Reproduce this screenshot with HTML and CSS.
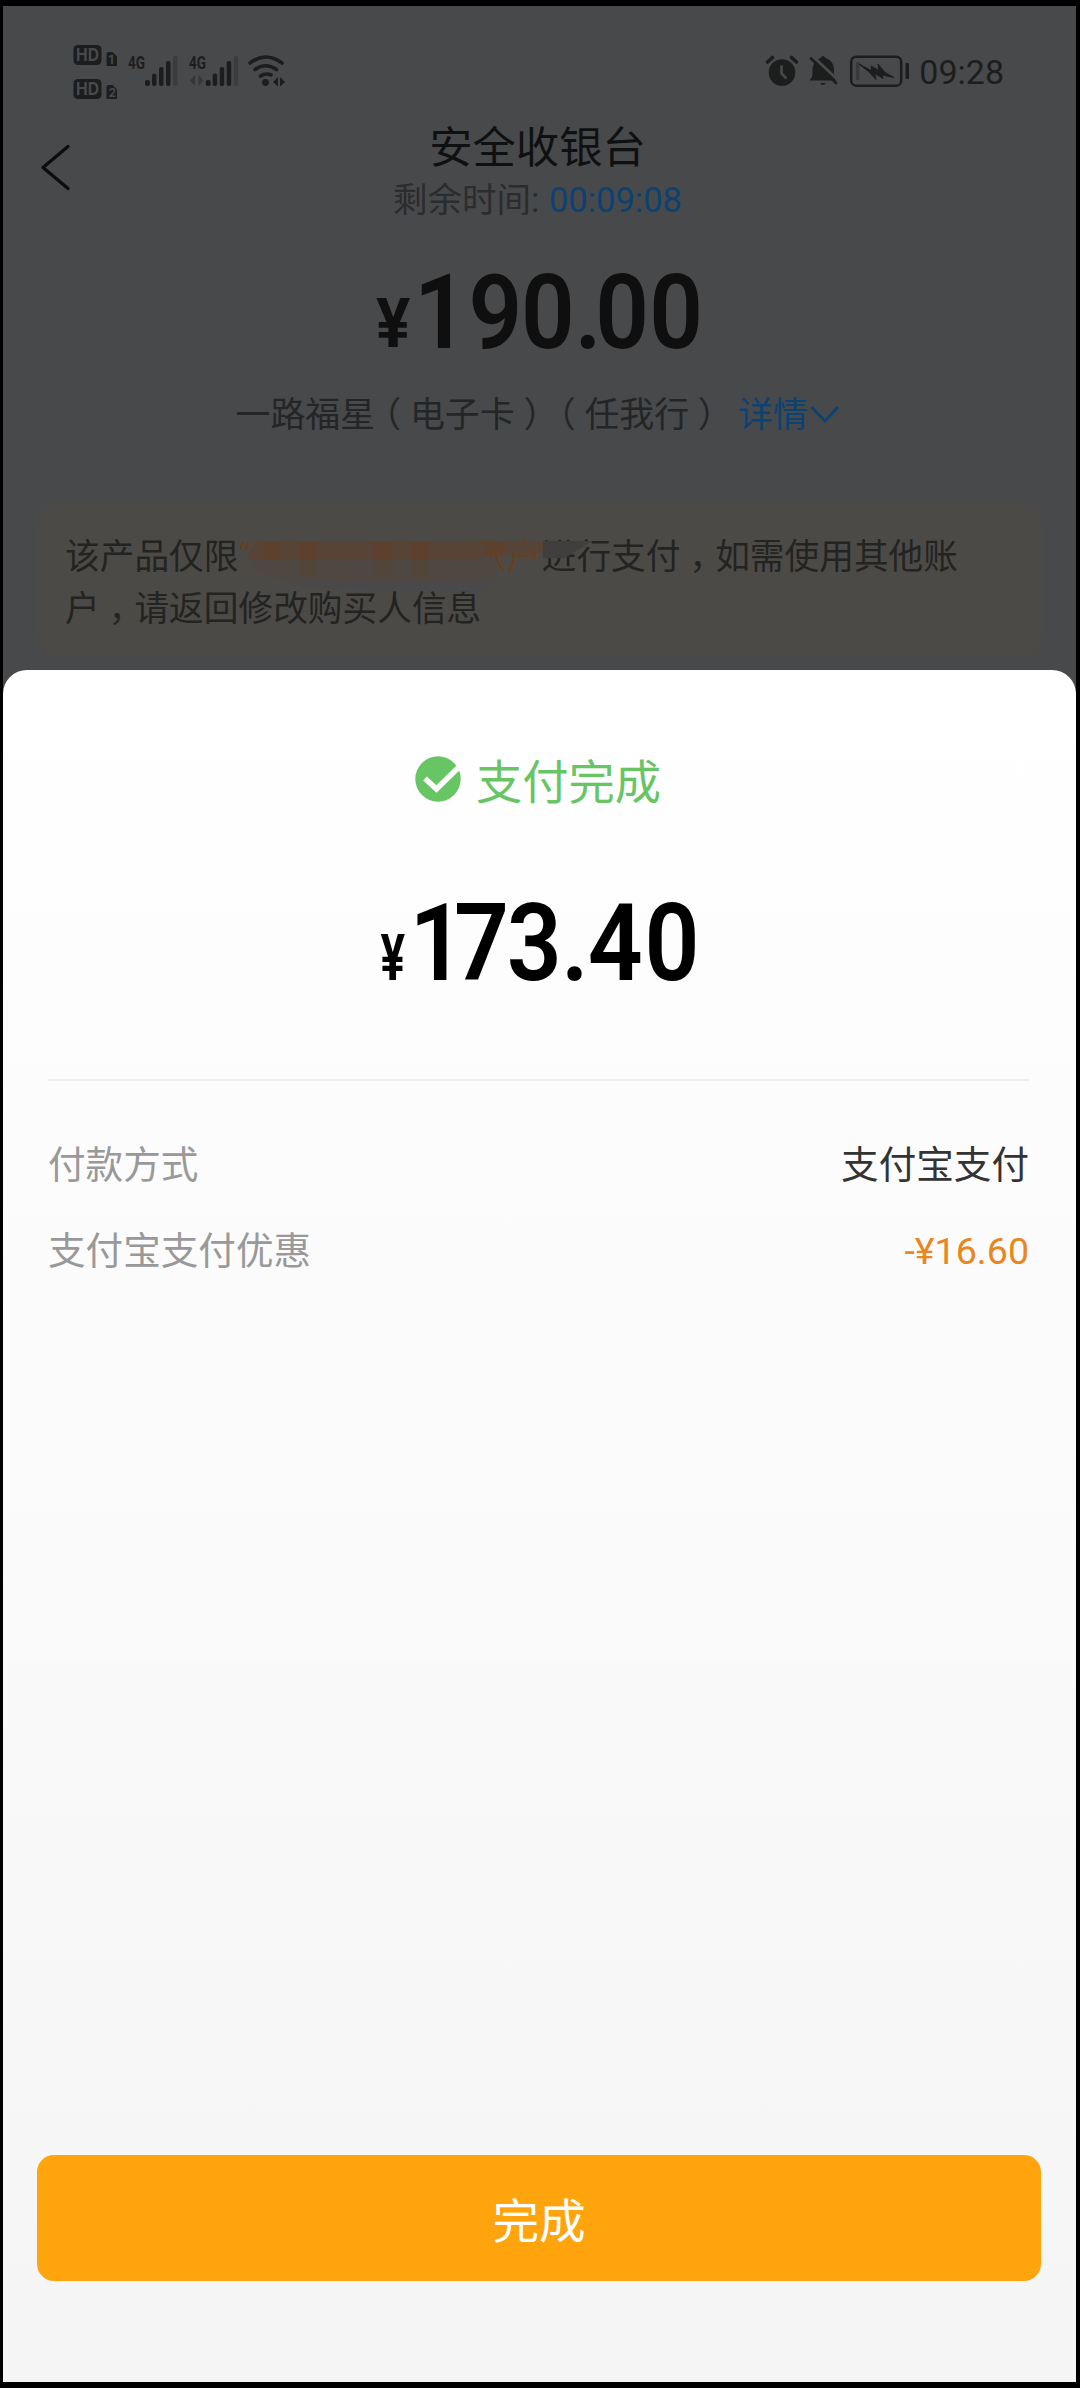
FILE: index.html
```html
<!DOCTYPE html>
<html lang="zh-CN">
<head>
<meta charset="utf-8">
<title>安全收银台</title>
<link rel="stylesheet" href="styles.css">
</head>
<body>
<main class="screen">
  <section class="cashier">
    <div class="status">
      <svg class="status-left" width="216" height="60" viewBox="72 42 216 60">
        <g fill="#1c1e1e">
          <rect x="73.500" y="45" width="28" height="20" rx="4.500"/>
          <rect x="73.500" y="79" width="28" height="20" rx="4.500"/>
          <path d="M106.500 54q0-2 2-2h4l4.500 4.500v9.500h-10.500z"/>
          <path d="M106.500 87q0-2 2-2h4l4.500 4.500v9.500h-10.500z"/>
          <g id="bars">
            <rect x="145" y="80" width="5" height="6" rx="2"/>
            <rect x="152" y="73.500" width="4.500" height="12.500" rx="2"/>
            <rect x="159" y="67" width="4.500" height="19" rx="2"/>
            <rect x="166" y="61" width="4.500" height="25" rx="2"/>
            <rect x="173" y="56" width="4.500" height="30" rx="2" fill="#3b3c3d"/>
          </g>
          <use href="#bars" x="60.700"/>
          <path fill="#363738" d="M195 75v11l-5-5.500zM198.500 75v11l5-5.500z"/>
          <circle cx="265.500" cy="82.500" r="3.400"/>
          <path d="M278 77v9.500l-5-4.500zM280 77v9.500l5-4.500z"/>
        </g>
        <g fill="none" stroke="#1c1e1e" stroke-width="3.600" stroke-linecap="round">
          <path d="M250 63q15.500-12 32 0M255 69.500q10.500-7.500 21.500 0M260.500 76q5-3.500 10.500-1"/>
        </g>
        <g class="hd-text">
          <text x="76" y="61" textLength="23" lengthAdjust="spacingAndGlyphs">HD</text>
          <text x="76" y="95" textLength="23" lengthAdjust="spacingAndGlyphs">HD</text>
          <text class="sim" x="108.500" y="64">1</text>
          <text class="sim" x="108.500" y="97">2</text>
        </g>
        <g class="net-text">
          <text x="128" y="69" textLength="17" lengthAdjust="spacingAndGlyphs">4G</text>
          <text x="189" y="69" textLength="17" lengthAdjust="spacingAndGlyphs">4G</text>
        </g>
      </svg>
      <div class="status-right">
        <svg width="145" height="36" viewBox="767 54 145 36">
          <circle cx="784" cy="72.500" r="13.300" fill="#1c1e1e"/>
          <path d="M769.500 62l5-4.500M793.500 57.500l5 4.500" stroke="#1c1e1e" stroke-width="3.600" stroke-linecap="round"/>
          <path d="M783.500 65.500v8l5 5" fill="none" stroke="#48494b" stroke-width="2.600"/>
          <path d="M811 80.500c4-3 3.500-5 3.500-11 0-5 4-10.500 8-11.500q2.500-4 5 0c5 1.500 8.500 6 8.500 11.500 0 6-.5 8 3.500 11z" fill="#1c1e1e"/>
          <path d="M822 83h6q-3 4-6 0z" fill="#1c1e1e"/>
          <path d="M814 55.500l27 25.500" stroke="#48494b" stroke-width="3"/>
          <path d="M813 58.500l25 24.500" stroke="#1c1e1e" stroke-width="2.600" stroke-linecap="round"/>
          <rect x="853.200" y="56.700" width="50" height="29" rx="5" fill="none" stroke="#1c1e1e" stroke-width="2.500"/>
          <rect x="907.500" y="63" width="3.500" height="16" rx="1" fill="#1c1e1e"/>
          <path d="M858 62h3.500v18h-3.500z" fill="#38393a"/>
          <path d="M861 64l13 7-1-5 8 4.500-1-6.500 7 8.500 9 5-12-2.500 1 3.500-8-5 1 6-7.500-8z" fill="#1c1e1e" stroke="#1c1e1e"/>
        </svg>
        <span class="clock">09:28</span>
      </div>
    </div>
    <header class="header">
      <svg class="back" width="34" height="48" viewBox="0 0 34 48"><path d="M31 3.500L6 24.500l25 21" fill="none" stroke="#0c0d0e" stroke-width="3.400" stroke-linecap="round" stroke-linejoin="round"/></svg>
      <div class="titles">
        <h1>安全收银台</h1>
        <p class="countdown">剩余时间: <span>00:09:08</span></p>
      </div>
    </header>
    <svg class="amount dim" width="340" height="90" viewBox="370 265 340 90">
      <text class="yen" transform="translate(376 346.500) scale(.93 1)">¥</text>
      <text class="digits" font-size="104.500" transform="translate(0 347.500) scale(.9 1)" x="460 520.500 579 638.500 661.500 721.500">190.00</text>
    </svg>
    <p class="desc">一路福星<i>（</i>电子卡<i>）</i><i>（</i>任我行<i>）</i><a>详情<svg width="30" height="18" viewBox="0 0 30 18"><path d="M1.500 0L15 14l13-14" fill="none" stroke="#0a4274" stroke-width="2.600"/></svg></a></p>
    <div class="notice">
      <p class="line"><span>该产品仅限<b>“</b></span><span><b>”账户</b>进行支付<i>，</i>如需使用其他账</span></p>
      <p class="line">户<i>，</i>请返回修改购买人信息</p>
      <svg class="mosaic" width="354" height="60" viewBox="243 536 354 60">
        <path d="M248 556C250 574 280 582 310 586L478 590Q494 586 497 572L490 556H248z" fill="#4e4742"/>
        <path d="M290 583q90-4 190 0l14-2q-4 10-16 11l-60-1-108-3z" fill="#49484a"/>
        <path d="M258 541H543V553H482V560H248Q247 550 258 541z" fill="#574437"/>
        <path d="M543 541H592L576 551 565 558H543z" fill="#413f3e"/>
        <path d="M263 541h17v19h-17zM299 541h18v19h-18zM374 541h18v19h-18zM411 541h19v19h-19zM485 541h18v12h-18z" fill="#5d402d"/>
        <path d="M299 560h18v16h-18zM374 560h18v17h-18zM411 560h19v18h-19z" fill="#52453a"/>
      </svg>
    </div>
  </section>
  <section class="sheet">
    <div class="result">
      <svg width="46" height="46" viewBox="0 0 46 46"><circle cx="23" cy="23" r="22.700" fill="#68c563"/><path d="M10 22.500L21.500 33 46 9" fill="none" stroke="#fff" stroke-width="5.500" stroke-linejoin="miter"/></svg>
      <span>支付完成</span>
    </div>
    <svg class="amount paid" width="340" height="90" viewBox="370 895 340 90">
      <text class="yen" font-size="64.500" transform="translate(380.500 980) scale(.71 1)">¥</text>
      <text class="digits" font-size="107" transform="translate(0 980) scale(.9 1)" x="455 504.500 563 623.500 653 716">173.40</text>
    </svg>
    <dl class="details">
      <div><dt>付款方式</dt><dd>支付宝支付</dd></div>
      <div><dt>支付宝支付优惠</dt><dd class="discount">-¥16.60</dd></div>
    </dl>
    <button class="done">完成</button>
  </section>
</main>
</body>
</html>
```
FILE: styles.css
```css
* { box-sizing: border-box; margin: 0; padding: 0; }
body { background: #000; font-family: Roboto, "Noto Sans CJK SC", sans-serif; }
.screen { display: flex; flex-direction: column; width: 1073px; height: 2376px; margin: 6px 4px 6px 3px; background: #48494b; }
svg { display: block; flex: none; overflow: visible; }
i, b { font-style: normal; font-weight: 400; }

.cashier { display: flex; flex-direction: column; height: 664px; color: #1f2021; }
.status { display: flex; justify-content: space-between; padding: 36px 72px 0 69px; height: 102px; }
.status-right { display: flex; gap: 9px; height: 36px; margin-top: 12px; }
.clock { font-size: 34px; line-height: 36px; color: #1c1e1e; }
.hd-text { font: 700 17px Inter, sans-serif; fill: #48494b; }
.hd-text .sim { font-size: 12px; }
.net-text { font: 700 19px Roboto, sans-serif; fill: #1c1e1e; }

.header { display: grid; grid-template-columns: 34px 1fr 34px; padding: 0 38px 0 34px; height: 130px; }
.back { margin-top: 35px; }
.titles { text-align: center; }
h1 { font-size: 43.300px; font-weight: 400; line-height: 60px; margin-top: 11px; color: #0f1011; }
.countdown { font-size: 34.500px; line-height: 42px; color: #2b2c2d; }
.countdown span { color: #0a4274; margin-left: 1px; }

.amount { margin: 0 auto 0 367px; font-family: Roboto, sans-serif; }
.amount .digits { font-weight: 600; }
.amount .yen { font-weight: 700; }
.dim { margin-top: 27px; fill: #0f0f0f; }
.dim .yen { font-size: 69px; }
.desc { display: flex; align-items: center; margin: 35px 0 0 232.500px; font-size: 34.900px; line-height: 52px; white-space: nowrap; color: #242526; }
.desc i, .notice i { display: inline-block; width: 1em; text-align: center; font-feature-settings: "halt"; }
.desc a { display: flex; align-items: center; gap: 2px; margin-left: 14px; color: #0a4274; }

.notice { position: relative; height: 153px; margin: 61px 34px 0 35px; padding: 29px 0 0 27px; border-radius: 18px; background: #4c4a47; font-size: 34.700px; line-height: 51.500px; color: #232322; }
.line { display: flex; align-items: baseline; white-space: nowrap; }
.line span + span { margin-left: auto; padding-right: 84px; }
.notice b { color: #66401f; }
.mosaic { position: absolute; left: 205px; top: 33px; }

.sheet { flex: 1; display: flex; flex-direction: column; padding: 0 35px 101px 34px; border-radius: 24px 24px 0 0; background: linear-gradient(#fff, #f5f5f5); }
.result { display: flex; justify-content: center; align-items: center; gap: 15px; height: 60px; margin: 78px 2px 0 0; font-size: 46.300px; color: #68c563; }
.result svg { margin-top: 1px; }
.paid { margin: 87px auto 0 333px; fill: #000; }
.details { margin: 94px 12px 0 11px; padding-top: 41px; border-top: 2px solid #efefef; font-size: 37.600px; line-height: 86px; color: #333; }
.details div { display: flex; justify-content: space-between; height: 86px; }
dt { color: #999; }
.discount { color: #e98620; }
.done { height: 126px; margin-top: auto; border: 0; border-radius: 17px; background: #ffa40c; color: #fff; font: 400 46.600px/126px "Noto Sans CJK SC", sans-serif; }
```
